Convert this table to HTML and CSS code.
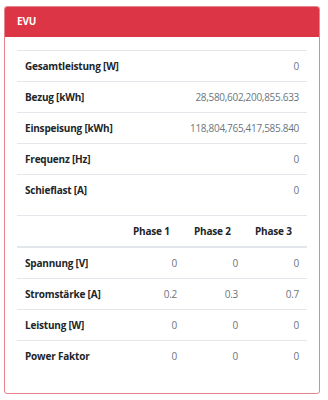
FILE: index.html
```html
<!DOCTYPE html>
<html lang="de">
<head>
<meta charset="utf-8">
<link rel="stylesheet" href="styles.css">
</head>
<body>
<div class="card">
  <div class="card-header">EVU</div>
  <div class="card-body">
    <table class="tbl">
      <tbody>
        <tr><th>Gesamtleistung [W]</th><td>0</td></tr>
        <tr><th>Bezug [kWh]</th><td>28,580,602,200,855.633</td></tr>
        <tr><th>Einspeisung [kWh]</th><td>118,804,765,417,585.840</td></tr>
        <tr><th>Frequenz [Hz]</th><td>0</td></tr>
        <tr><th>Schieflast [A]</th><td>0</td></tr>
      </tbody>
    </table>
    <table class="tbl phases">
      <colgroup><col class="c1"><col class="cp"><col class="cp"><col class="cp"></colgroup>
      <thead>
        <tr><th></th><th class="ph">Phase 1</th><th class="ph">Phase 2</th><th class="ph">Phase 3</th></tr>
      </thead>
      <tbody>
        <tr><th>Spannung [V]</th><td>0</td><td>0</td><td>0</td></tr>
        <tr><th>Stromstärke [A]</th><td>0.2</td><td>0.3</td><td>0.7</td></tr>
        <tr><th>Leistung [W]</th><td>0</td><td>0</td><td>0</td></tr>
        <tr><th>Power Faktor</th><td>0</td><td>0</td><td>0</td></tr>
      </tbody>
    </table>
  </div>
</div>
</body>
</html>
```
FILE: styles.css
```css
html, body {
  margin: 0;
  padding: 0;
  background: #fff;
}
body {
  font-family: "Open Sans", "Noto Sans", sans-serif;
  font-size: 10px;
  line-height: 15px;
  color: #212529;
}
.card {
  margin: 6px 8px 0 4px;
  border: 1px solid #e6838d;
  border-radius: 3px;
  overflow: hidden;
}
.card-header {
  background: #dc3545;
  color: #fff;
  font-weight: 700;
  height: 31px;
  line-height: 31px;
  margin: -1px -1px 0 -1px;
  padding: 0 12px 0 13px;
  letter-spacing: -0.2px;
}
.card-body {
  padding: 13px 12px 12px 12px;
}
.tbl {
  width: 100%;
  border-collapse: collapse;
  margin-bottom: 10px;
}
.tbl th, .tbl td {
  padding: 8px 8px 7px 8px;
  border-top: 1px solid #e3e6ea;
  vertical-align: top;
  white-space: nowrap;
}
.tbl th {
  text-align: left;
  font-weight: 700;
  letter-spacing: -0.2px;
}
.tbl td {
  text-align: right;
  color: #6c757d;
  letter-spacing: -0.3px;
}
.phases {
  table-layout: fixed;
}
.phases .c1 { width: 107px; }
.phases .cp { width: 61px; }
.phases thead th {
  border-bottom: 2px solid #e3e6ea;
}
.phases tbody tr:first-child th,
.phases tbody tr:first-child td {
  border-top: 0;
}
.phases .ph {
  padding-left: 9px;
}
```
